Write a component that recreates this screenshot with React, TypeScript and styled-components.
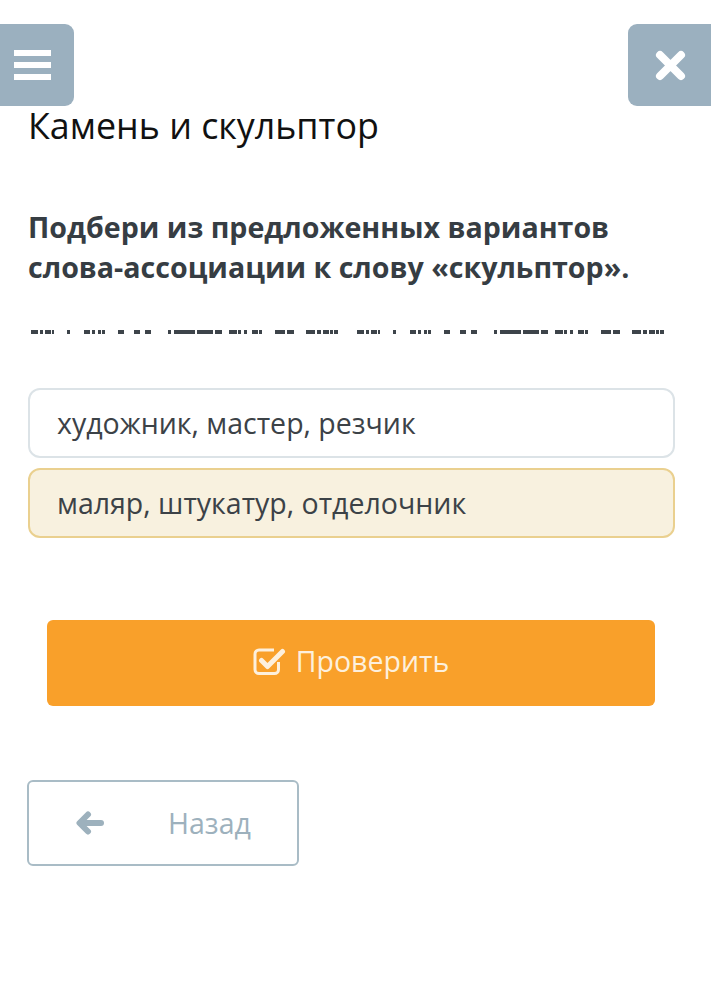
import React from "react";
import styled, { createGlobalStyle } from "styled-components";

const Global = createGlobalStyle`
  html, body { margin: 0; padding: 0; background: #ffffff; }
  body { font-family: "Open Sans", "Noto Sans", sans-serif; }
  * { box-sizing: border-box; }
`;

const Page = styled.div`
  width: 711px;
  min-height: 997px;
  background: #fff;
  padding-top: 24px;
  overflow: hidden;
`;

const Header = styled.div`
  display: flex;
  justify-content: space-between;
  height: 82px;
`;

const HeaderButton = styled.button<{ $side: "left" | "right" }>`
  width: ${(p) => (p.$side === "left" ? "74px" : "83px")};
  height: 82px;
  border: none;
  padding: 0;
  background: #9bb0bf;
  border-radius: ${(p) => (p.$side === "left" ? "0 9px 9px 0" : "9px 0 0 9px")};
  display: flex;
  align-items: center;
  justify-content: flex-start;
  padding-left: ${(p) => (p.$side === "left" ? "14px" : "27px")};
  color: #fff;
`;

const Content = styled.div`
  padding: 0 36px 0 28px;
  display: flex;
  flex-direction: column;
`;

const Title = styled.h1`
  margin: -1px 0 0 0;
  font-size: 35.8px;
  line-height: 40px;
  font-weight: 400;
  color: #111;
`;

const Question = styled.p`
  margin: 62px 0 0 0;
  max-width: 620px;
  font-size: 28.6px;
  line-height: 40px;
  font-weight: 700;
  color: #363d43;
`;

const Dashes = styled.svg`
  display: block;
  margin-top: 43px;
`;

const Options = styled.div`
  margin-top: 54px;
  display: flex;
  flex-direction: column;
  gap: 10px;
`;

const Option = styled.div<{ $selected?: boolean }>`
  height: 70px;
  border-radius: 12px;
  border: 2px solid ${(p) => (p.$selected ? "#ead08f" : "#dce3e7")};
  background: ${(p) => (p.$selected ? "#f8f1df" : "#ffffff")};
  display: flex;
  align-items: center;
  padding-left: 27px;
  font-size: 28.5px;
  color: #3c4247;
`;

const CheckButton = styled.button`
  margin: 82px 20px 0 19px;
  height: 86px;
  border: none;
  border-radius: 6px;
  background: #f9a02a;
  color: #fdf0dd;
  font-family: "Open Sans", "Noto Sans", sans-serif;
  font-size: 28.5px;
  display: flex;
  align-items: center;
  justify-content: center;
  gap: 10px;
  padding: 0 0 4px 0;
`;

const BackButton = styled.button`
  margin: 74px 0 0 -1px;
  width: 272px;
  height: 86px;
  border: 2px solid #a9bcc6;
  border-radius: 6px;
  background: #fff;
  color: #9db1bd;
  font-family: "Open Sans", "Noto Sans", sans-serif;
  font-size: 28.5px;
  display: flex;
  align-items: center;
  padding: 0 0 0 46px;
  gap: 63px;
`;

const dashSegs: [number, number][] = [
  [31, 7], [40, 3], [45, 6], [52, 2], [67, 3], [84, 6], [92, 3], [98, 3], [102, 3],
  [118, 6], [134, 3], [137, 3], [145, 6], [168, 3], [174, 6], [180, 12], [192, 3],
  [197, 16], [215, 7], [229, 8], [238, 3], [244, 3], [252, 6], [259, 3], [275, 10],
  [287, 7], [306, 9], [317, 4], [323, 6], [330, 3], [334, 4],
];

const HamburgerIcon = () => (
  <svg width="37" height="31" viewBox="0 0 37 31">
    <rect x="0" y="0" width="37" height="6" fill="#fff" />
    <rect x="0" y="12" width="37" height="6" fill="#fff" />
    <rect x="0" y="24" width="37" height="6" fill="#fff" />
  </svg>
);

const CloseIcon = () => (
  <svg width="31" height="31" viewBox="0 0 31 31">
    <path d="M5 5 L26 26 M26 5 L5 26" stroke="#fff" strokeWidth="8" strokeLinecap="round" />
  </svg>
);

const CheckSquareIcon = () => (
  <svg width="33" height="30" viewBox="0 0 33 30">
    <path
      d="M25.5 16 V23.5 a4 4 0 0 1 -4 4 H6 a4 4 0 0 1 -4 -4 V8 a4 4 0 0 1 4 -4 H21"
      fill="none"
      stroke="#fdf0dd"
      strokeWidth="3"
    />
    <path d="M8.5 14.5 L14.5 20.5 L29.5 5.5" fill="none" stroke="#fdf0dd" strokeWidth="5" strokeLinecap="round" strokeLinejoin="round" />
  </svg>
);

const ArrowLeftIcon = () => (
  <svg width="30" height="24" viewBox="0 0 30 24">
    <path d="M13 3.5 L4.5 12 L13 20.5" fill="none" stroke="#9db1bd" strokeWidth="6" strokeLinecap="round" strokeLinejoin="round" />
    <path d="M6 12 H26" stroke="#9db1bd" strokeWidth="6" strokeLinecap="round" />
  </svg>
);

export default function App() {
  return (
    <Page>
      <Global />
      <Header>
        <HeaderButton $side="left" aria-label="menu">
          <HamburgerIcon />
        </HeaderButton>
        <HeaderButton $side="right" aria-label="close">
          <CloseIcon />
        </HeaderButton>
      </Header>
      <Content>
        <Title>Камень и скульптор</Title>
        <Question>
          Подбери из предложенных вариантов слова-ассоциации к слову «скульптор».
        </Question>
        <Dashes width="650" height="4" viewBox="28 0 650 4">
          {dashSegs.map(([x, w], i) => (
            <rect key={"a" + i} x={x} y={0} width={w} height={4} fill="#3d444a" />
          ))}
          {dashSegs.map(([x, w], i) => (
            <rect key={"b" + i} x={x + 326} y={0} width={w} height={4} fill="#3d444a" />
          ))}
        </Dashes>
        <Options>
          <Option>художник, мастер, резчик</Option>
          <Option $selected>маляр, штукатур, отделочник</Option>
        </Options>
        <CheckButton>
          <CheckSquareIcon />
          Проверить
        </CheckButton>
        <BackButton>
          <ArrowLeftIcon />
          Назад
        </BackButton>
      </Content>
    </Page>
  );
}
